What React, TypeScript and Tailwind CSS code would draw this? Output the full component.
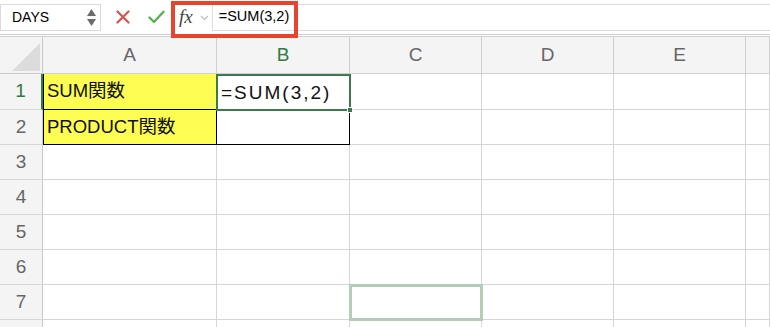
import React from "react";

const font = { fontFamily: '"Liberation Sans", "Noto Sans CJK JP", Arial, sans-serif' };

const cols = ["A", "B", "C", "D", "E", ""];

function Cell({ r, c }: { r: number; c: number }) {
  let content: React.ReactNode = null;
  let cls = "border-r border-b border-[#d6d6d6] bg-white";
  if (c === 0 && r === 1) {
    cls = "border-r border-b border-black bg-[#fdfd53] border-l border-l-black";
    content = "SUM関数";
  } else if (c === 0 && r === 2) {
    cls = "border-r border-b border-black bg-[#fdfd53] border-l border-l-black";
    content = "PRODUCT関数";
  } else if (c === 1 && r === 2) {
    cls = "border-r border-b border-black bg-white";
  }
  return (
    <div className={`${cls} flex items-center pl-[3px] text-[18.5px] text-[#111] leading-none whitespace-nowrap`}>
      {content}
    </div>
  );
}

export default function App() {
  const rows = [1, 2, 3, 4, 5, 6, 7, 8];
  return (
    <div className="relative w-[770px] h-[327px] overflow-hidden bg-white" style={font}>
      {/* Toolbar */}
      <div className="h-[37px] bg-white border-b-[3px] border-double border-[#d0d0d0] flex items-center">
        <div className="w-[101px] h-[27px] border border-[#dadada] bg-white flex items-center pl-[11px] text-[14px] text-black relative">
          DAYS
          <div className="absolute right-[4px] top-[4px] flex flex-col gap-[3px]">
            <svg width="9" height="7" viewBox="0 0 9 7"><path d="M4.5 0 L9 7 L0 7 Z" fill="#6b6b6b" /></svg>
            <svg width="9" height="7" viewBox="0 0 9 7"><path d="M0 0 L9 0 L4.5 7 Z" fill="#6b6b6b" /></svg>
          </div>
        </div>
        <svg className="ml-[15px]" width="14" height="14" viewBox="0 0 14 14">
          <path d="M1.5 1.5 L12.5 12.5 M12.5 1.5 L1.5 12.5" stroke="#d9534f" strokeWidth="2.2" strokeLinecap="round" />
        </svg>
        <svg className="ml-[18px]" width="17" height="14" viewBox="0 0 17 14">
          <path d="M1.5 7.5 L6 12 L15.5 1.8" stroke="#55b050" strokeWidth="2.3" fill="none" strokeLinecap="round" strokeLinejoin="round" />
        </svg>
        <span className="ml-[14px] text-[19px] italic text-[#444]" style={{ fontFamily: '"Liberation Serif", "Times New Roman", serif' }}>
          fx
        </span>
        <svg className="ml-[7px] mt-[2px]" width="9" height="6" viewBox="0 0 9 6">
          <path d="M1 1 L4.5 4.5 L8 1" stroke="#bdbdbd" strokeWidth="1.2" fill="none" />
        </svg>
        <div className="ml-[3px] flex-1 h-[27px] border border-[#dcdcdc] border-r-0 bg-white flex items-center pl-[6px] text-[14.5px] text-black font-medium">
          =SUM(3,2)
        </div>
      </div>

      {/* Grid */}
      <div className="grid grid-cols-[43px_174px_133px_132px_132px_132px_1fr] grid-rows-[37px_36px_35px_35px_35px_35px_35px_35px_35px]">
        <div className="bg-[#f4f4f4] border-r border-b border-[#c9c9c9] relative">
          <svg className="absolute left-[12px] top-[6px]" width="28" height="28" viewBox="0 0 28 28">
            <path d="M28 0 L28 28 L0 28 Z" fill="#dcdcdc" />
          </svg>
        </div>
        {cols.map((c, i) => (
          <div
            key={c + i}
            className={`bg-[#f4f4f4] border-r border-b border-[#d0d0d0] flex items-center justify-center text-[19px] ${
              c === "B" ? "text-[#2f7a45]" : "text-[#666]"
            }`}
          >
            {c}
          </div>
        ))}
        {rows.map((r) => (
          <React.Fragment key={r}>
            <div
              className={`bg-[#f4f4f4] border-b border-[#d6d6d6] flex items-center justify-center text-[19px] ${
                r === 1 ? "text-[#2f7a45] border-r-2 border-r-[#2f7a45]" : "text-[#666] border-r border-r-[#c9c9c9]"
              }`}
            >
              {r === 8 ? "" : r}
            </div>
            {cols.map((_, c) => (
              <Cell key={c} r={r} c={c} />
            ))}
          </React.Fragment>
        ))}
      </div>

      {/* Active cell B1 */}
      <div className="absolute left-[216px] top-[74px] w-[135px] h-[37px] border-2 border-[#3a7a4b] flex items-center pl-[3px] text-[19px] tracking-[2px] text-[#111] leading-none">
        =SUM(3,2)
        <div className="absolute right-[-4px] bottom-[-4px] w-[6px] h-[6px] bg-[#3a7a4b] border border-white" />
      </div>

      {/* Faint selection B7 region */}
      <div className="absolute left-[349px] top-[284px] w-[134px] h-[37px] border-[3px] border-[#b3cdb8]" />

      {/* Red annotation box */}
      <div className="absolute left-[171px] top-[1px] w-[127px] h-[37px] border-[4px] border-[#e8432c]" />
    </div>
  );
}
